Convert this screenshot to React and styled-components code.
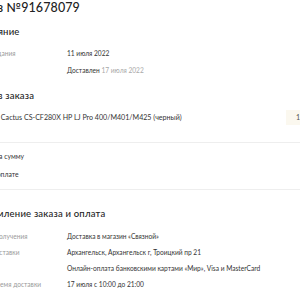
import styled, { createGlobalStyle } from "styled-components";

const Global = createGlobalStyle`
  html, body {
    margin: 0;
    padding: 0;
    background: #fff;
    overflow: hidden;
  }
  body {
    font-family: "Lato", "Liberation Sans", sans-serif;
    color: #222;
  }
`;

const Page = styled.main`
  width: 340px;
  margin-left: -29px;
  padding-top: 1px;
`;

const Title = styled.h1`
  margin: 0;
  font-size: 12.5px;
  font-weight: 500;
  line-height: 14px;
  letter-spacing: 0.1px;
`;

const Section = styled.section`
  padding: ${({ $pad }) => $pad || "0"};
  border-bottom: ${({ $line }) => ($line ? "1px solid #eeeeee" : "none")};
`;

const Heading = styled.h2`
  margin: 0;
  font-size: 9.5px;
  font-weight: 500;
  line-height: 12px;
  letter-spacing: 0.2px;
`;

const Rows = styled.div`
  display: flex;
  flex-direction: column;
  gap: ${({ $gap }) => $gap || "6px"};
  margin-top: ${({ $top }) => $top || "10px"};
`;

const Row = styled.div`
  display: grid;
  grid-template-columns: 96px 1fr;
  font-size: 6.6px;
  line-height: 11px;
  white-space: nowrap;
`;

const Label = styled.span`
  color: #9a9a9a;
`;

const Value = styled.span`
  color: #333;
`;

const Muted = styled.span`
  color: #a8a8a8;
`;

const Item = styled.div`
  display: flex;
  align-items: center;
  justify-content: space-between;
  margin-top: 8px;
  padding-left: 9px;
  font-size: 7.1px;
  line-height: 11px;
  color: #333;
  white-space: nowrap;
`;

const Qty = styled.span`
  background: #fbf8ef;
  padding: 2px 3px 2px 10px;
  margin-right: 8px;
  color: #555;
`;

const Sum = styled.div`
  display: flex;
  flex-direction: column;
  gap: 7px;
  font-size: 6.8px;
  line-height: 11px;
  color: #333;
`;

export default function App() {
  return (
    <>
      <Global />
      <Page>
        <Title>Заказ №91678079</Title>

        <Section $pad="11px 0 0">
          <Heading>Состояние</Heading>
          <Rows $top="10px" $gap="6px">
            <Row>
              <Label>Дата создания</Label>
              <Value>11 июля 2022</Value>
            </Row>
            <Row>
              <Label>Статус</Label>
              <Value>
                Доставлен <Muted>17 июля 2022</Muted>
              </Value>
            </Row>
          </Rows>
        </Section>

        <Section $pad="14px 0 17px" $line>
          <Heading>Состав заказа</Heading>
          <Item>
            <span>Тонер Cactus CS-CF280X HP LJ Pro 400/M401/M425 (черный)</span>
            <Qty>1</Qty>
          </Item>
        </Section>

        <Section $pad="8px 0 9px" $line>
          <Sum>
            <span>Товары на сумму</span>
            <span>Итого к оплате</span>
          </Sum>
        </Section>

        <Section $pad="18px 0 0">
          <Heading>Оформление заказа и оплата</Heading>
          <Rows $top="11px" $gap="5px">
            <Row>
              <Label>Способ получения</Label>
              <Value>Доставка в магазин «Связной»</Value>
            </Row>
            <Row>
              <Label>Адрес доставки</Label>
              <Value>Архангельск, Архангельск г, Троицкий пр 21</Value>
            </Row>
            <Row>
              <Label>Оплата</Label>
              <Value>Онлайн-оплата банковскими картами «Мир», Visa и MasterCard</Value>
            </Row>
            <Row>
              <Label>Дата и время доставки</Label>
              <Value>17 июля с 10:00 до 21:00</Value>
            </Row>
          </Rows>
        </Section>
      </Page>
    </>
  );
}
